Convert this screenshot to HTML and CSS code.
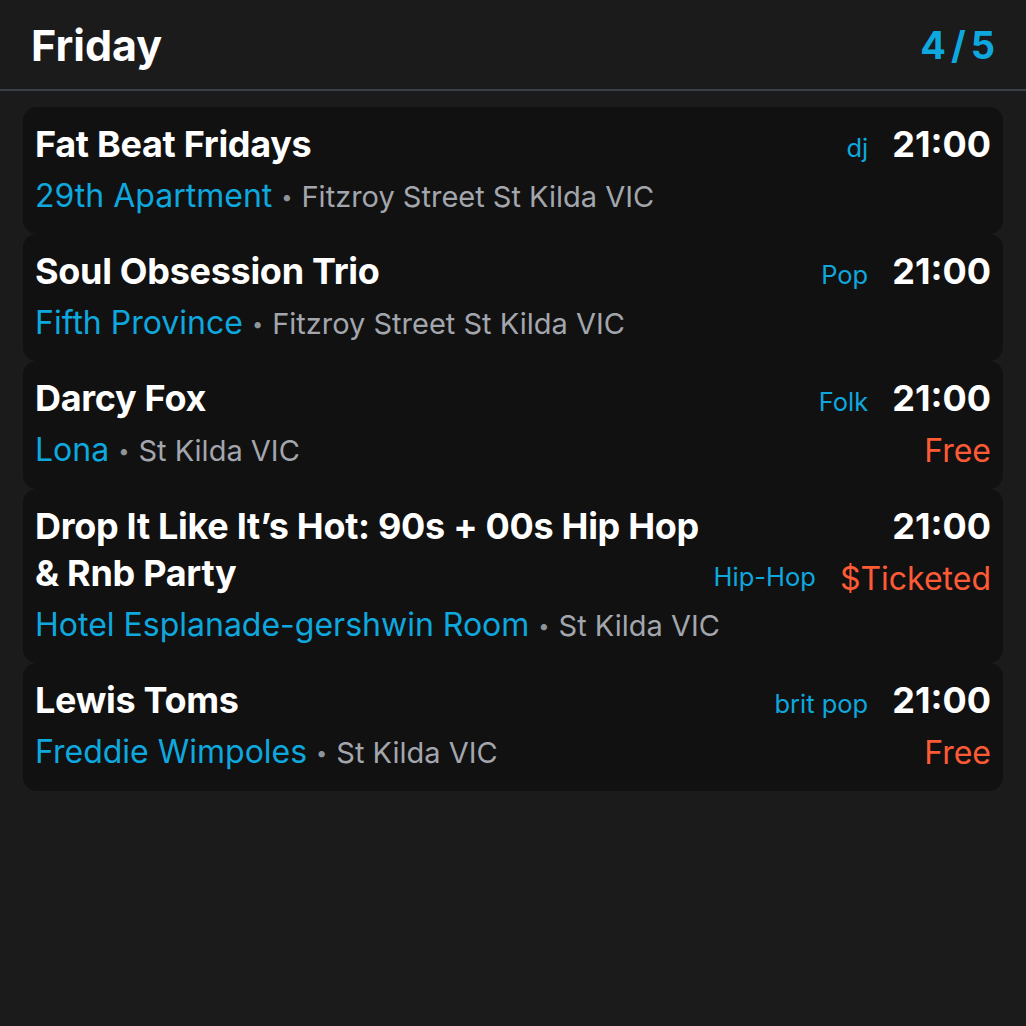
FILE: index.html
```html
<!DOCTYPE html>
<html>
<head>
<meta charset="utf-8">
<link rel="stylesheet" href="styles.css">
</head>
<body>
<div class="page">
  <header class="header">
    <h1 class="day">Friday</h1>
    <div class="pager">4 / 5</div>
  </header>
  <div class="list">
    <div class="card">
      <div class="main">
        <div class="head"><div class="title">Fat Beat Fridays</div><div class="genre">dj</div></div>
        <div class="where"><span class="venue">29th Apartment</span><span class="dot">•</span><span class="addr">Fitzroy Street St Kilda VIC</span></div>
      </div>
      <div class="side"><div class="time">21:00</div></div>
    </div>
    <div class="card">
      <div class="main">
        <div class="head"><div class="title">Soul Obsession Trio</div><div class="genre">Pop</div></div>
        <div class="where"><span class="venue">Fifth Province</span><span class="dot">•</span><span class="addr">Fitzroy Street St Kilda VIC</span></div>
      </div>
      <div class="side"><div class="time">21:00</div></div>
    </div>
    <div class="card">
      <div class="main">
        <div class="head"><div class="title">Darcy Fox</div><div class="genre">Folk</div></div>
        <div class="where"><span class="venue">Lona</span><span class="dot">•</span><span class="addr">St Kilda VIC</span></div>
      </div>
      <div class="side"><div class="time">21:00</div><div class="price">Free</div></div>
    </div>
    <div class="card">
      <div class="main">
        <div class="head"><div class="title">Drop It Like It’s Hot: 90s + 00s Hip Hop &amp; Rnb Party</div><div class="genre">Hip-Hop</div></div>
        <div class="where"><span class="venue">Hotel Esplanade-gershwin Room</span><span class="dot">•</span><span class="addr">St Kilda VIC</span></div>
      </div>
      <div class="side"><div class="time">21:00</div><div class="price">$Ticketed</div></div>
    </div>
    <div class="card">
      <div class="main">
        <div class="head"><div class="title">Lewis Toms</div><div class="genre">brit pop</div></div>
        <div class="where"><span class="venue">Freddie Wimpoles</span><span class="dot">•</span><span class="addr">St Kilda VIC</span></div>
      </div>
      <div class="side"><div class="time">21:00</div><div class="price">Free</div></div>
    </div>
  </div>
</div>
</body>
</html>
```

FILE: styles.css
```css
html, body {
  margin: 0;
  padding: 0;
  background: #1b1b1b;
  height: 100%;
}
body {
  font-family: Inter, "Noto Sans", "Liberation Sans", sans-serif;
  color: #ffffff;
}
.page {
  display: flex;
  flex-direction: column;
}
.header {
  display: flex;
  align-items: center;
  justify-content: space-between;
  padding: 0 31px;
  border-bottom: 2px solid #3a3f4a;
  box-sizing: border-box;
  height: 91px;
}
.day {
  margin: 0;
  font-size: 43px;
  font-weight: 700;
}
.pager {
  font-size: 38px;
  font-weight: 700;
  color: #0ea8df;
  word-spacing: -4px;
}
.list {
  display: flex;
  flex-direction: column;
  margin: 16px 23px 0;
}
.card {
  display: flex;
  align-items: flex-start;
  gap: 24px;
  background: #111111;
  border-radius: 14px;
  padding: 14px 12px 15px;
}
.main {
  flex: 1;
  display: flex;
  flex-direction: column;
  gap: 6px;
}
.head {
  display: flex;
  align-items: last baseline;
  gap: 6px;
}
.title {
  flex: 1;
  font-size: 36px;
  font-weight: 700;
  line-height: 47px;
  letter-spacing: -0.3px;
}
.genre {
  font-size: 25.5px;
  color: #0ea8df;
  white-space: nowrap;
}
.where {
  font-size: 32px;
  line-height: 44px;
  white-space: nowrap;
}
.venue {
  color: #0ea8df;
}
.dot {
  color: #8f939a;
  font-size: 20px;
  margin: 0 9px;
  vertical-align: 3px;
}
.addr {
  color: #a3a6ad;
  font-size: 29px;
}
.side {
  display: flex;
  flex-direction: column;
  align-items: flex-end;
  gap: 6px;
}
.time {
  font-size: 36px;
  font-weight: 700;
  line-height: 47px;
}
.price {
  font-size: 32px;
  line-height: 46px;
  color: #ff5a36;
}
```
